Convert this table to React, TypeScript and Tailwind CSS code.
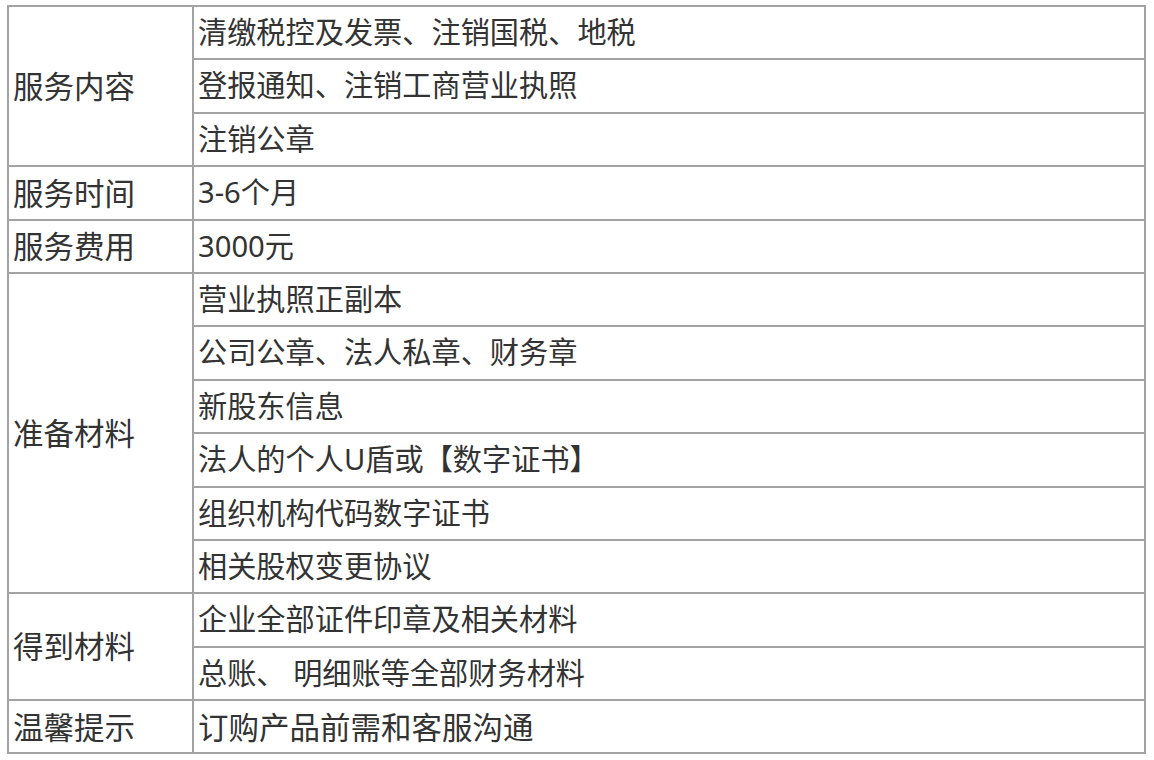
const sections: { label: string; items: string[] }[] = [
  { label: "服务内容", items: ["清缴税控及发票、注销国税、地税", "登报通知、注销工商营业执照", "注销公章"] },
  { label: "服务时间", items: ["3-6个月"] },
  { label: "服务费用", items: ["3000元"] },
  {
    label: "准备材料",
    items: [
      "营业执照正副本",
      "公司公章、法人私章、财务章",
      "新股东信息",
      "法人的个人U盾或【数字证书】",
      "组织机构代码数字证书",
      "相关股权变更协议",
    ],
  },
  { label: "得到材料", items: ["企业全部证件印章及相关材料", "总账、 明细账等全部财务材料"] },
  { label: "温馨提示", items: ["订购产品前需和客服沟通"] },
];

export default function App() {
  return (
    <div className="min-h-[760px] w-[1154px] bg-white pl-[7px] pt-[5px]">
      <table
        className="w-[1139px] border-collapse border-2 border-[#999] text-[29.2px] leading-none text-[#333]"
        style={{ fontFamily: '"Noto Sans", "Noto Sans CJK SC", sans-serif' }}
      >
        <tbody>
          {sections.map((s, si) =>
            s.items.map((item, i) => (
              <tr key={s.label + i} className="h-[53.4px]">
                {i === 0 && (
                  <td
                    rowSpan={s.items.length}
                    className="w-[185px] border-2 border-[#a3a3a3] pl-[4px] pr-[2px] align-middle whitespace-nowrap text-[30.5px]"
                  >
                    {s.label}
                  </td>
                )}
                <td
                  className={
                    si === sections.length - 1
                      ? "border-2 border-[#a3a3a3] pl-[4px] pr-[4px] align-middle whitespace-pre text-[30.5px]"
                      : "border-2 border-[#a3a3a3] pl-[4px] pr-[4px] align-middle whitespace-pre"
                  }
                >
                  {item}
                </td>
              </tr>
            ))
          )}
        </tbody>
      </table>
    </div>
  );
}
